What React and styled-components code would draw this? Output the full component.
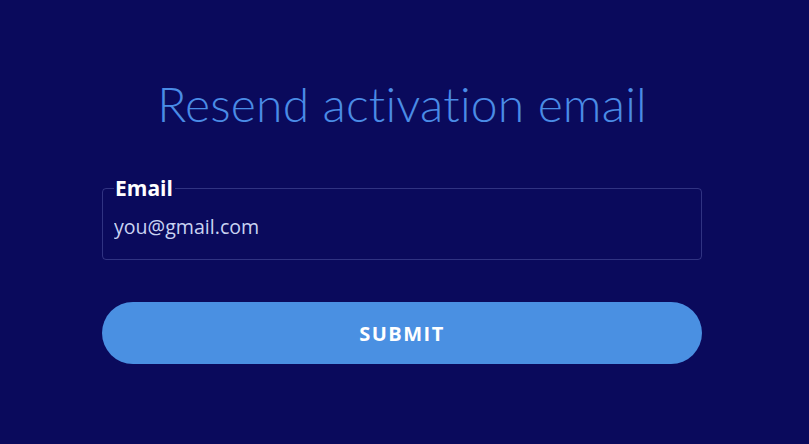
import React from "react";
import styled, { createGlobalStyle } from "styled-components";

const Global = createGlobalStyle`
  html, body { margin: 0; padding: 0; background: #0a0a5c; }
  body { font-family: "Open Sans", sans-serif; }
`;

const Page = styled.div`
  min-height: 444px;
  background: #0a0a5c;
  display: flex;
  padding-left: 102px;
  box-sizing: border-box;
`;

const Card = styled.form`
  width: 600px;
  display: flex;
  flex-direction: column;
  padding-top: 76px;
`;

const Title = styled.h1`
  margin: 0;
  text-align: center;
  font-family: Lato, sans-serif;
  font-weight: 300;
  font-size: 48px;
  line-height: 56px;
  color: #4a8ce6;
  letter-spacing: 0.2px;
`;

const Field = styled.fieldset`
  margin: 44px 0 0 0;
  padding: 0 11px 20px 11px;
  box-sizing: border-box;
  border: 1px solid rgba(120, 130, 200, 0.35);
  border-radius: 4px;
`;

const Legend = styled.legend`
  padding: 0 2px 0 1px;
  margin-left: 0;
  color: #ffffff;
  font-family: "Open Sans", sans-serif;
  font-weight: 700;
  font-size: 21px;
  line-height: 24px;
`;

const Input = styled.input`
  display: block;
  width: 100%;
  border: none;
  outline: none;
  background: transparent;
  padding: 0;
  margin-top: 15px;
  font-family: "Open Sans", sans-serif;
  font-size: 19.6px;
  line-height: 24px;
  height: 24px;
  color: #c9d3f2;
`;

const Submit = styled.button`
  margin-top: 42px;
  height: 62px;
  border: none;
  border-radius: 31px;
  background: #4a90e2;
  color: #ffffff;
  font-family: "Open Sans", sans-serif;
  font-weight: 700;
  font-size: 20px;
  letter-spacing: 1.5px;
  cursor: pointer;
`;

export default function App() {
  return (
    <>
      <Global />
      <Page>
        <Card onSubmit={(e) => e.preventDefault()}>
          <Title>Resend activation email</Title>
          <Field>
            <Legend>Email</Legend>
            <Input defaultValue="you@gmail.com" />
          </Field>
          <Submit type="submit">SUBMIT</Submit>
        </Card>
      </Page>
    </>
  );
}
